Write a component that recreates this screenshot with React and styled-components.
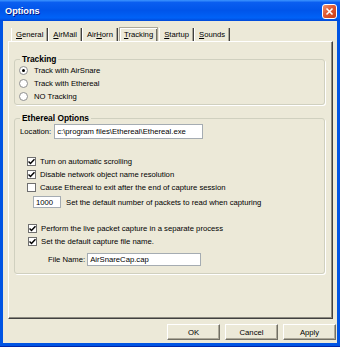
import React from "react";
import styled, { createGlobalStyle } from "styled-components";

const Global = createGlobalStyle`
  html, body {
    margin: 0;
    padding: 0;
    overflow: hidden;
    background: #fff;
  }
`;

const Window = styled.div`
  width: 340px;
  height: 347px;
  display: flex;
  flex-direction: column;
  background: #0054e3;
  font-family: "Liberation Sans", Arial, sans-serif;
  font-size: 7.7px;
  color: #000;
`;

const TitleBar = styled.div`
  height: 21px;
  flex: none;
  display: flex;
  align-items: center;
  justify-content: space-between;
  padding: 0 3px 0 5px;
  background: linear-gradient(#3d95ff 0%, #0a5ef0 12%, #0055ea 50%, #0062f7 85%, #0048d8 100%);
`;

const Title = styled.div`
  color: #fff;
  font-weight: bold;
  font-size: 9.2px;
  text-shadow: 1px 1px 0 #0a1883;
`;

const CloseButton = styled.div`
  width: 15px;
  height: 15px;
  margin-top: 1px;
  box-sizing: border-box;
  border: 1px solid #fff;
  border-radius: 3px;
  background: linear-gradient(135deg, #f0936c 0%, #e05a33 45%, #c93c14 100%);
  display: flex;
  align-items: center;
  justify-content: center;
`;

const Frame = styled.div`
  flex: 1;
  display: flex;
  padding: 0 3px 3px 3px;
  border-bottom: 1px solid #0026a8;
`;

const Client = styled.div`
  flex: 1;
  background: #ece9d8;
  display: flex;
  flex-direction: column;
  padding: 6px 4px 0 5px;
`;

const TabStrip = styled.div`
  display: flex;
  align-items: flex-end;
  height: 14px;
  margin-left: 3px;
`;

const Tab = styled.div`
  box-sizing: border-box;
  height: ${(p) => (p.$active ? "14px" : "13px")};
  padding: 0 4px;
  display: flex;
  align-items: center;
  white-space: nowrap;
  ${(p) =>
    p.$active
      ? `
    border: 1px solid #aca899;
    border-bottom: none;
    box-shadow: inset 1px 1px 0 #fff, inset -1px 0 0 #716f64;
    margin: 0 1px;
  `
      : `
    border-left: 1px solid #fff;
    border-right: 1px solid #404040;
    box-shadow: inset -1px 0 0 #aca899;
  `}
  u {
    text-decoration: underline;
  }
`;

const Panel = styled.div`
  height: 278px;
  box-sizing: border-box;
  border-top: 1px solid #fff;
  border-left: 1px solid #fff;
  border-right: 1px solid #404040;
  border-bottom: 1px solid #404040;
  box-shadow: inset -1px -1px 0 #8c8a7f;
  padding: 12px 7px 0 5px;
  display: flex;
  flex-direction: column;
`;

const Group = styled.fieldset`
  margin: ${(p) => p.$gap || 0}px 0 0 0;
  padding: 0 0 ${(p) => p.$bottom || 0}px 0;
  border: 1px solid #d0d0bf;
  border-radius: 3px;
  box-shadow: 1px 1px 0 #fff;
  min-width: 0;
  display: flex;
  flex-direction: column;
`;

const Legend = styled.legend`
  margin-left: 5px;
  padding: 0 2px;
  font-weight: bold;
  font-size: 8.4px;
  line-height: 10px;
`;

const Row = styled.div`
  display: flex;
  align-items: center;
  height: ${(p) => p.$h || 13}px;
  margin-top: ${(p) => p.$top || 0}px;
  padding-left: ${(p) => p.$indent || 0}px;
  gap: ${(p) => p.$gap || 4}px;
  white-space: nowrap;
`;

const RadioDot = styled.span`
  width: 9px;
  height: 9px;
  box-sizing: border-box;
  border-radius: 50%;
  border: 1px solid #8e8f8f;
  background: #fff;
  display: flex;
  align-items: center;
  justify-content: center;
  flex: none;
  &::after {
    content: "";
    width: 3px;
    height: 3px;
    border-radius: 50%;
    background: ${(p) => (p.$on ? "#000" : "transparent")};
  }
`;

const Box = styled.span`
  width: 9px;
  height: 9px;
  box-sizing: border-box;
  border: 1px solid #6f6f6f;
  background: #fff;
  flex: none;
  display: flex;
  align-items: center;
  justify-content: center;
`;

const Field = styled.div`
  box-sizing: border-box;
  width: ${(p) => p.$w}px;
  height: ${(p) => p.$h}px;
  background: #fff;
  border: 1px solid #a5acb2;
  padding-left: 2px;
  display: flex;
  align-items: center;
  overflow: hidden;
  white-space: nowrap;
`;

const ButtonRow = styled.div`
  display: flex;
  justify-content: flex-end;
  gap: 5px;
  margin-top: 5px;
  margin-right: -3px;
`;

const Button = styled.div`
  width: 53px;
  height: 16px;
  box-sizing: border-box;
  border-top: 1px solid #fff;
  border-left: 1px solid #fff;
  border-right: 1px solid #716f64;
  border-bottom: 1px solid #716f64;
  box-shadow: inset -1px -1px 0 #aca899;
  display: flex;
  align-items: center;
  justify-content: center;
`;

const Radio = ({ on, children }) => (
  <Row $indent={4} $gap={6}>
    <RadioDot $on={on} />
    <span>{children}</span>
  </Row>
);

const Check = ({ on, indent = 12, top, children }) => (
  <Row $indent={indent} $top={top}>
    <Box>
      {on && (
        <svg width="7" height="7" viewBox="0 0 7 7">
          <path d="M0.5 3.5 L2.5 5.5 L6.5 1.2" stroke="#000" strokeWidth="1.5" fill="none" />
        </svg>
      )}
    </Box>
    <span>{children}</span>
  </Row>
);

const tabs = [
  ["G", "eneral"],
  ["A", "irMail"],
  ["AirH", "orn", true],
  ["T", "racking"],
  ["S", "tartup"],
  ["S", "ounds"],
];

export default function App() {
  return (
    <Window>
      <Global />
      <TitleBar>
        <Title>Options</Title>
        <CloseButton>
          <svg width="9" height="9" viewBox="0 0 9 9">
            <path d="M1.5 1.5 L7.5 7.5 M7.5 1.5 L1.5 7.5" stroke="#fff" strokeWidth="1.6" />
          </svg>
        </CloseButton>
      </TitleBar>
      <Frame>
        <Client>
          <TabStrip>
            {tabs.map(([a, b, mid], i) => (
              <Tab key={i} $active={i === 3}>
                {mid ? (
                  <span>
                    {a.slice(0, 3)}
                    <u>{a.slice(3)}</u>
                    {b}
                  </span>
                ) : (
                  <span>
                    <u>{a}</u>
                    {b}
                  </span>
                )}
              </Tab>
            ))}
          </TabStrip>
          <Panel>
            <Group $bottom={1}>
              <Legend>Tracking</Legend>
              <Radio on>Track with AirSnare</Radio>
              <Radio>Track with Ethereal</Radio>
              <Radio>NO Tracking</Radio>
            </Group>
            <Group $gap={8} $bottom={6}>
              <Legend>Ethereal Options</Legend>
              <Row $h={17} $indent={5} $gap={3}>
                <span>Location:</span>
                <Field $w={149} $h={15}>c:\program files\Ethereal\Ethereal.exe</Field>
              </Row>
              <Check on top={15}>Turn on automatic scrolling</Check>
              <Check on>Disable network object name resolution</Check>
              <Check>Cause Ethereal to exit after the end of capture session</Check>
              <Row $h={14} $top={1} $indent={18} $gap={5}>
                <Field $w={28} $h={12}>1000</Field>
                <span>Set the default number of packets to read when capturing</span>
              </Row>
              <Check on indent={13} top={13}>Perform the live packet capture in a separate process</Check>
              <Check on indent={13}>Set the default capture file name.</Check>
              <Row $h={16} $top={3} $indent={33} $gap={2}>
                <span>File Name:</span>
                <Field $w={114} $h={13}>AirSnareCap.cap</Field>
              </Row>
            </Group>
          </Panel>
          <ButtonRow>
            <Button>OK</Button>
            <Button>Cancel</Button>
            <Button>Apply</Button>
          </ButtonRow>
        </Client>
      </Frame>
    </Window>
  );
}
